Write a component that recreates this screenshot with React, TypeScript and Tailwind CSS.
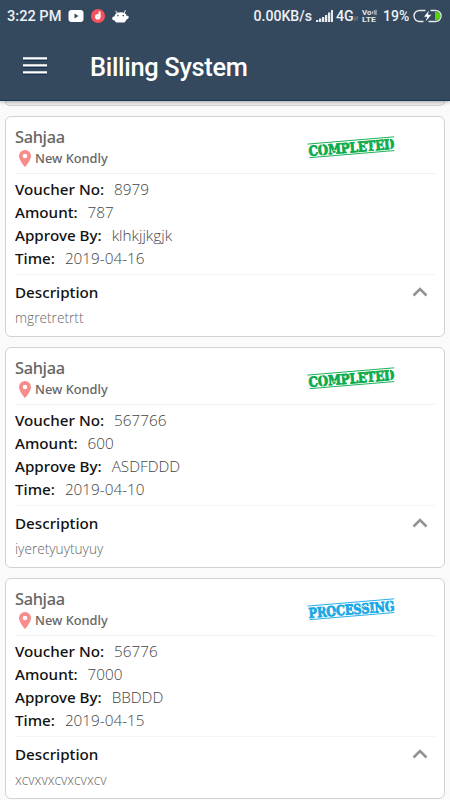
type Status = 'COMPLETED' | 'PROCESSING';

interface Voucher {
  name: string;
  location: string;
  voucherNo: string;
  amount: string;
  approveBy: string;
  time: string;
  description: string;
  status: Status;
}

const vouchers: Voucher[] = [
  {
    name: 'Sahjaa',
    location: 'New Kondly',
    voucherNo: '8979',
    amount: '787',
    approveBy: 'klhkjjkgjk',
    time: '2019-04-16',
    description: 'mgretretrtt',
    status: 'COMPLETED'
  },
  {
    name: 'Sahjaa',
    location: 'New Kondly',
    voucherNo: '567766',
    amount: '600',
    approveBy: 'ASDFDDD',
    time: '2019-04-10',
    description: 'iyeretyuytuyuy',
    status: 'COMPLETED'
  },
  {
    name: 'Sahjaa',
    location: 'New Kondly',
    voucherNo: '56776',
    amount: '7000',
    approveBy: 'BBDDD',
    time: '2019-04-15',
    description: 'xcvxvxcvxcvxcv',
    status: 'PROCESSING'
  }
];

function StatusBar() {
  return (
    <div className="flex h-8 items-center pl-[7px] pr-[7px] text-[14px] font-medium text-[#eef1f4]">
      <span className="w-[61px] translate-y-[1px] whitespace-nowrap text-[14.6px]">3:22 PM</span>
      <svg className="h-[12px] w-[16px]" viewBox="0 0 15 12">
        <rect width="15" height="12" rx="3" fill="#fff" />
        <path d="M6 3.4v5L10 6z" fill="#34495e" />
      </svg>
      <svg className="ml-[7px] h-[14px] w-[14px]" viewBox="0 0 14 14">
        <circle cx="7" cy="7" r="7" fill="#f4525c" />
        <circle cx="6.8" cy="7.8" r="2.8" fill="#fff" />
        <path d="M7.6 2.5h1.9v5.3H7.6z" fill="#fff" />
        <circle cx="6.8" cy="7.8" r="0.4" fill="#f4525c" />
      </svg>
      <svg className="ml-[7px] h-[13px] w-[17px]" viewBox="0 0 17 13">
        <path d="M3.5 .8l2 2.500M13.5 .3l-1.5 3" stroke="#fff" strokeWidth="1" />
        <path
          d="M2.500 6.500C2.800 3.600 5.200 2.300 8.500 2.300s5.800 1.300 6.200 3.600c1.400-.4 2.300.5 2 1.700-.3 1.300-1.300 1.900-2.300 1.900-.4 2-1.700 3.100-3.400 3.100H6c-1.800 0-3.200-.9-3.500-2.400-1.500.2-2.500-.9-2.200-2.300.3-1.200 1.200-1.700 2.200-1.400z"
          fill="#fff"
        />
        <circle cx="5.9" cy="5.6" r=".8" fill="#34495e" />
        <circle cx="11.3" cy="5.6" r=".8" fill="#34495e" />
      </svg>
      <div className="ml-auto flex items-center">
        <span className="mr-[2px] w-[61px] translate-y-[1px] whitespace-nowrap pl-[0.5px] text-[14.1px]">0.00KB/s</span>
        <svg className="h-[12px] w-[17px]" viewBox="0 0 17 12" fill="#e6eaed">
          <path d="M0 10h2.3v2H0zM3 8.5h2.3V12H3zM6 7h2.3v5H6zM9 5h2.3v7H9zM12 2.5h2.3V12H12zM15 0h2v12h-2z" />
        </svg>
        <span className="ml-[3px] w-[18px] translate-y-[1px] text-[14.2px]">4G</span>
        <svg className="h-[5px] w-[4px] translate-y-[3px]" viewBox="0 0 5 5" fill="none" stroke="#9aa6b2" strokeWidth=".8">
          <path d="M1.2 0v5M0 3.7l1.2 1.1M3.8 5V0M5 1.3L3.8.2" />
        </svg>
        {/* VoLTE badge */}
        <svg className="ml-[4px] h-[14px] w-[15px] overflow-visible" viewBox="0 0 15 14" fill="#e6eaed">
          <text x="0" y="6" textLength="9.5" lengthAdjust="spacingAndGlyphs" className="text-[8px] font-bold">
            Vo
          </text>
          <path d="M10.7 2.2v2.6M12.2 1.3c.6 1.2.6 3 0 4.200M14 .8v5.3" fill="none" stroke="#e6eaed" strokeWidth=".9" />
          <text x="0" y="13.4" textLength="14" lengthAdjust="spacingAndGlyphs" className="text-[8px] font-bold">
            LTE
          </text>
        </svg>
        <span className="ml-[6px] w-[27px] translate-y-[1px] whitespace-nowrap text-[14px]">19%</span>
        <svg className="ml-[2px] h-[14px] w-[31px]" viewBox="0 0 30 14">
          <path d="M13 1.5H7a5.5 5.5 0 0 0 0 11h4M18 1.5h5a5.5 5.5 0 0 1 0 11h-7" fill="none" stroke="#e6eaed" strokeWidth="1.4" />
          <path d="M22.5 3H24a4 4 0 0 1 0 8h-1.5z" fill="#55d40c" />
          <path d="M16.5 1.5l-5 6.3h3.3L13 12.5l5.8-6.7h-3.5z" fill="#fff" />
        </svg>
      </div>
    </div>
  );
}

function Header() {
  return (
    <header className="relative h-[101px] border-b border-[#143a59] bg-[#34495e] font-[Roboto,sans-serif] shadow-[0_1px_4px_rgba(0,0,0,0.3)]">
      <StatusBar />
      <div className="flex h-[69px] items-center pl-[23px]">
        <button className="-translate-y-[1px]" aria-label="Menu">
          <svg className="h-[18px] w-6" viewBox="0 0 24 18">
            <path d="M0 3h24M0 10h24M0 17h24" stroke="#122c4c" strokeWidth="1.4" />
            <path d="M0 1.400h24M0 8.400h24M0 15.400h24" stroke="#fff" strokeWidth="2.4" />
          </svg>
        </button>
        <h1 className="ml-[43px] translate-y-[1px] text-[25.4px] font-medium tracking-[-0.3px] text-white">
          Billing System
        </h1>
      </div>
    </header>
  );
}

function Stamp({ status }: { status: Status }) {
  const color = status === 'COMPLETED' ? '#0cab4c' : '#19a8e6';

  return (
    <svg className="h-[30px] w-[92px] overflow-visible" viewBox="0 0 92 30">
      <g transform="translate(1.5 9) rotate(-4.8)">
        <path d="M0 .1h87M1 13.8h85" stroke={color} strokeWidth="0.9" />
        <text
          x="0.5"
          y="12"
          textLength="86"
          lengthAdjust="spacingAndGlyphs"
          fill={color}
          stroke={color}
          strokeWidth="0.9"
          className="font-['DejaVu_Serif',serif] text-[13.6px] font-bold"
        >
          {status}
        </text>
        {/* worn ink */}
        <path
          d="M4 5l2 1M14.5 1v4M14.5 9v4M25 8l3 1M36 4l1 2M46 9l2 1M54 4l3 2M64 9l1 2M71 4l3 1M82 1v4M82 9v4"
          stroke="#fff"
          strokeWidth="0.8"
        />
      </g>
    </svg>
  );
}

function Row({ label, value }: { label: string; value: string }) {
  return (
    <div className="flex h-[23.1px] items-center gap-[10px] whitespace-nowrap">
      <span className="font-['Noto_Sans',sans-serif] text-[15.2px] font-medium text-[#111]">{label}</span>
      <span className="font-['Open_Sans',sans-serif] text-[15.3px] font-light text-[#444]">{value}</span>
    </div>
  );
}

function VoucherCard({ voucher }: { voucher: Voucher }) {
  return (
    <div className="h-[221px] rounded-[6px] border border-[#d2d2d2] bg-white px-[9px]">
      <div className="flex h-[57px] justify-between border-b border-[#f0f0f0] pt-[9px]">
        <div className="font-['Noto_Sans',sans-serif] font-medium text-[#666]">
          <h2 className="text-[16.4px] leading-[22px] tracking-[-0.35px]">{voucher.name}</h2>
          <div className="flex h-[21px] items-center pl-[4px] text-[12.8px]">
            <svg className="mr-[4px] h-[17px] w-[12px]" viewBox="0 0 12 17">
              <path
                d="M6 0a6 6 0 0 0-6 6c0 4.4 6 11 6 11s6-6.6 6-11a6 6 0 0 0-6-6zm0 3.7a2.3 2.3 0 1 1 0 4.6 2.3 2.3 0 0 1 0-4.6z"
                fill="#f98b8b"
              />
            </svg>
            {voucher.location}
          </div>
        </div>
        <div className="mt-[9px] mr-[37px]">
          <Stamp status={voucher.status} />
        </div>
      </div>
      <div className="h-[101px] border-b border-[#f4f4f4] pt-[4px]">
        <Row label="Voucher No:" value={voucher.voucherNo} />
        <Row label="Amount:" value={voucher.amount} />
        <Row label="Approve By:" value={voucher.approveBy} />
        <Row label="Time:" value={voucher.time} />
      </div>
      <div className="flex h-[34px] items-center justify-between pr-[7px]">
        <h3 className="font-['Noto_Sans',sans-serif] text-[15.2px] font-medium text-[#111]">Description</h3>
        <svg className="h-[10px] w-[16px]" viewBox="0 0 16 10" fill="none" stroke="#929292" strokeWidth="2.6">
          <path d="M1.5 8.5L8 2l6.5 6.5" />
        </svg>
      </div>
      <p className="font-['Open_Sans',sans-serif] text-[13.7px] leading-[17px] font-light text-[#666]">
        {voucher.description}
      </p>
    </div>
  );
}

export default function App() {
  return (
    <div className="h-[800px] w-full overflow-hidden bg-[#fafafa]">
      <Header />
      <main className="px-[5px]">
        <div className="h-[5px] rounded-b-[6px] border border-t-0 border-[#d2d2d2] bg-[#f0eeee]" />
        <div className="mt-[10px] flex flex-col gap-[10px]">
          {vouchers.map((voucher) => (
            <VoucherCard key={voucher.voucherNo} voucher={voucher} />
          ))}
        </div>
      </main>
    </div>
  );
}
